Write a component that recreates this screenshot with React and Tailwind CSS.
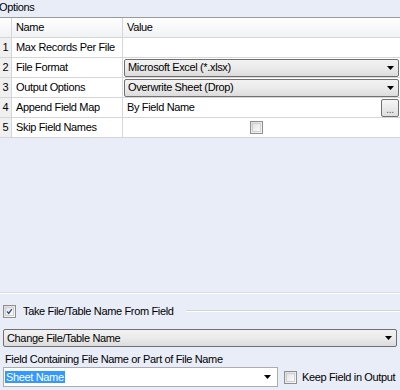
import React from 'react';

const rows = [
  { n: 1, name: 'Max Records Per File', kind: 'text', value: '' },
  { n: 2, name: 'File Format', kind: 'select', value: 'Microsoft Excel (*.xlsx)' },
  { n: 3, name: 'Output Options', kind: 'select', value: 'Overwrite Sheet (Drop)' },
  { n: 4, name: 'Append Field Map', kind: 'button', value: 'By Field Name' },
  { n: 5, name: 'Skip Field Names', kind: 'check', value: '' },
];

const Arrow = () => (
  <svg width="7" height="4" viewBox="0 0 7 4" className="shrink-0">
    <path d="M0 0 H7 L3.5 4 Z" fill="#000" />
  </svg>
);

const CheckBox = ({ checked }) => (
  <div className="w-[13px] h-[13px] border border-[#8f8f8f] bg-gradient-to-br from-[#dcdcdc] to-[#fafafa] flex items-center justify-center shrink-0">
    <div className="w-[9px] h-[9px] border border-[#d0d0d0] bg-gradient-to-br from-[#e4e4e4] to-[#fbfbfb] flex items-center justify-center">
      {checked && (
        <svg width="9" height="9" viewBox="0 0 9 9">
          <path d="M1.5 4.5 L3.5 7 L7.5 1.5" stroke="#2c4a8a" strokeWidth="1.6" fill="none" />
        </svg>
      )}
    </div>
  </div>
);

const ComboBox = ({ text, className }) => (
  <div className={`h-[18px] border border-[#707070] rounded-[2px] bg-gradient-to-b from-[#f2f2f2] via-[#ebebeb] to-[#dcdcdc] flex items-center pl-[3px] pr-[4px] ${className}`}>
    <span className="flex-1 truncate">{text}</span>
    <Arrow />
  </div>
);

export default function App() {
  return (
    <div className="w-[400px] h-[390px] overflow-hidden bg-[#e9edf7] text-black text-[11px] tracking-[-0.35px] font-['Liberation_Sans',Arial,sans-serif] flex flex-col">
      <div className="h-[17px] leading-[15px] -ml-[1px]">Options</div>

      {/* Property grid */}
      <div className="border-t border-[#9a9a9a] bg-white">
        <div className="h-[20px] flex border-b border-[#d6d6d6] bg-gradient-to-b from-[#ffffff] to-[#f1f2f4]">
          <div className="w-[12px] border-r border-[#d6d6d6]" />
          <div className="w-[111px] border-r border-[#d6d6d6] pl-[4px] flex items-center">Name</div>
          <div className="flex-1 pl-[4px] flex items-center">Value</div>
        </div>
        {rows.map((r) => (
          <div key={r.n} className="h-[20px] flex border-b border-[#d6d6d6]">
            <div className="w-[12px] border-r border-[#d6d6d6] bg-[#f0f0f0] flex items-center justify-center">{r.n}</div>
            <div className="w-[111px] border-r border-[#d6d6d6] pl-[4px] flex items-center whitespace-nowrap">{r.name}</div>
            <div className="flex-1 flex items-center">
              {r.kind === 'select' && <ComboBox text={r.value} className="flex-1 mx-[1px]" />}
              {r.kind === 'button' && (
                <>
                  <span className="flex-1 pl-[4px]">{r.value}</span>
                  <div className="w-[18px] h-[18px] mr-[1px] border border-[#707070] rounded-[2px] bg-gradient-to-b from-[#f6f6f6] to-[#dedede] flex items-end justify-center text-[10px] leading-[12px] text-[#555]">...</div>
                </>
              )}
              {r.kind === 'check' && (
                <div className="flex-1 flex justify-center pr-[11px]">
                  <CheckBox />
                </div>
              )}
            </div>
          </div>
        ))}
      </div>

      <div className="flex-1" />

      {/* Lower options */}
      <div className="border-t border-[#d9dce6]">
        <div className="border-t border-white flex flex-col pb-[3px]">
          <div className="h-[20px] mt-[7px] flex items-center pl-[3px] gap-[7px]">
            <CheckBox checked />
            <span className="whitespace-nowrap">Take File/Table Name From Field</span>
            <div className="flex-1 ml-[5px] border-t border-[#d0d4de] border-b border-b-white" />
          </div>
          <ComboBox text="Change File/Table Name" className="mx-[3px] mt-[8px]" />
          <div className="h-[14px] mt-[5px] pl-[5px] leading-[14px] whitespace-nowrap">Field Containing File Name or Part of File Name</div>
          <div className="flex items-center mt-[1px]">
            <div className="w-[275px] h-[20px] ml-[3px] bg-white border border-[#abadb3] flex items-center pl-[1px] pr-[6px]">
              <span className="flex-1"><span className="bg-[#3399ff] text-white px-[1px]">Sheet Name</span></span>
              <Arrow />
            </div>
            <div className="ml-[6px] flex items-center gap-[5px] whitespace-nowrap">
              <CheckBox />
              <span>Keep Field in Output</span>
            </div>
          </div>
        </div>
      </div>
    </div>
  );
}
